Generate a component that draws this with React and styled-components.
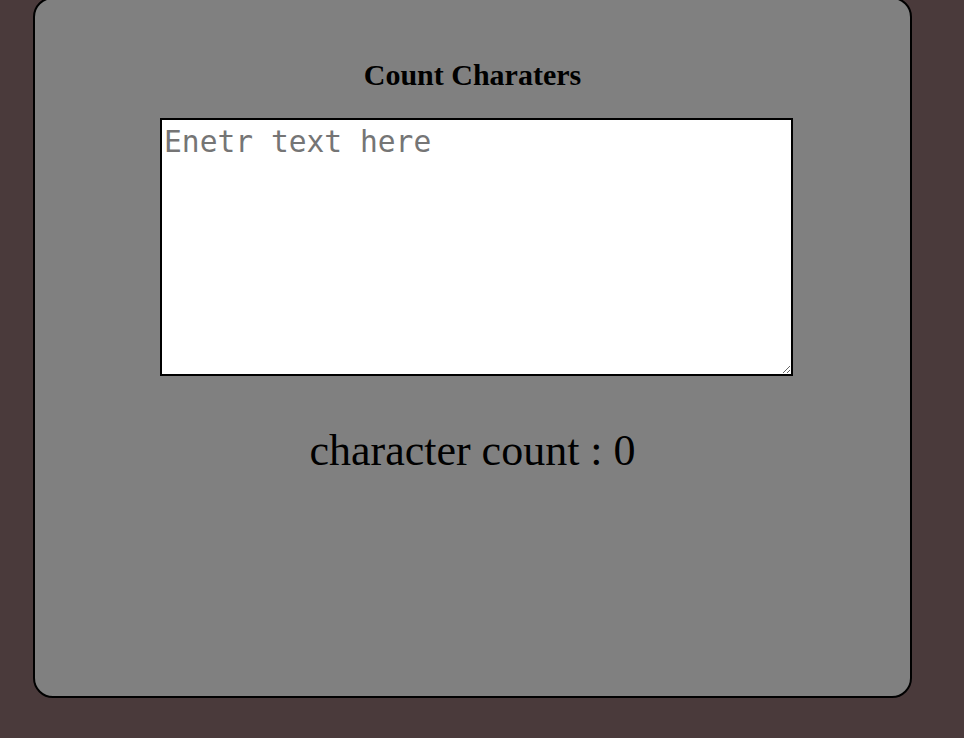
import React, { useState } from 'react';
import styled, { createGlobalStyle } from 'styled-components';

const GlobalStyle = createGlobalStyle`
  html, body {
    margin: 0;
    padding: 0;
    background: #4a3a3b;
    font-family: "Liberation Serif", "Times New Roman", serif;
  }
`;

const Card = styled.div`
  box-sizing: border-box;
  width: 879px;
  height: 701px;
  margin: -3px 0 0 33px;
  background: #808080;
  border: 2px solid #000;
  border-radius: 20px;
  display: flex;
  flex-direction: column;
  align-items: center;
`;

const Title = styled.h2`
  margin: 59px 0 0;
  font-size: 30px;
  line-height: 34px;
  font-weight: bold;
  color: #000;
`;

const Input = styled.textarea`
  box-sizing: border-box;
  width: 633px;
  height: 258px;
  margin: 26px 0 0 8px;
  padding: 5px 2px 2px 2px;
  border: 2px solid #000;
  background: #fff;
  font-family: "DejaVu Sans Mono", "Liberation Mono", monospace;
  font-size: 29.6px;
  outline: none;
  &::placeholder {
    color: #757575;
  }
`;

const Count = styled.p`
  margin: 50px 0 0;
  font-size: 44px;
  line-height: 50px;
  color: #000;
`;

export default function App() {
  const [text, setText] = useState('');
  return (
    <>
      <GlobalStyle />
      <Card>
        <Title>Count Charaters</Title>
        <Input
          placeholder="Enetr text here"
          value={text}
          onChange={(e) => setText(e.target.value)}
        />
        <Count>character count : {text.length}</Count>
      </Card>
    </>
  );
}
